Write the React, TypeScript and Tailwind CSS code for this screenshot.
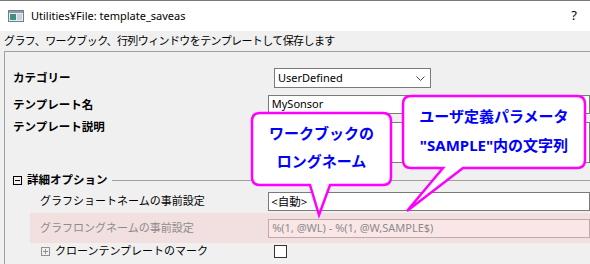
const font = "font-['Noto_Sans','Noto_Sans_CJK_JP',sans-serif]";

const WindowIcon = () => (
  <svg width="16" height="12" viewBox="0 0 16 12">
    <rect x="0.5" y="0.5" width="15" height="11" fill="#e8ecef" stroke="#6f7f8f" />
    <rect x="1" y="1" width="14" height="2" fill="#8a9aaa" />
    <rect x="2" y="4" width="6" height="6" fill="#3f8f7f" />
    <rect x="9" y="4" width="5" height="6" fill="#c8d0d8" />
  </svg>
);

const Callouts = () => (
  <>
    <svg className="absolute left-0 top-0" width="590" height="264" viewBox="0 0 590 264">
      <path
        d="M 260 113 H 383 Q 391 113 391 121 V 177 Q 391 185 383 185 H 330 L 319 215 L 310 185 H 260 Q 252 185 252 177 V 121 Q 252 113 260 113 Z"
        fill="#ffffff"
        stroke="#ff00ff"
        strokeWidth="2.5"
      />
      <path
        d="M 411 96 H 577 Q 585 96 585 104 V 160 Q 585 168 577 168 H 463 L 407 211 L 443 168 H 411 Q 403 168 403 160 V 104 Q 403 96 411 96 Z"
        fill="#ffffff"
        stroke="#ff00ff"
        strokeWidth="2.5"
      />
    </svg>
    <div className="absolute left-[252px] top-[113px] w-[139px] pt-[6px] text-center text-[15px] leading-[28px] font-bold text-[#0000ff]">
      <div>ワークブックの</div>
      <div>ロングネーム</div>
    </div>
    <div className="absolute left-[403px] top-[96px] w-[182px] pt-[6px] text-center text-[15px] leading-[29px] font-bold text-[#0000ff]">
      <div>ユーザ定義パラメータ</div>
      <div>"SAMPLE"内の文字列</div>
    </div>
  </>
);

export default function App() {
  return (
    <div className={`relative w-[590px] h-[264px] overflow-hidden bg-[#f0f0f0] text-black ${font}`}>
      {/* title bar */}
      <div className="h-[31px] bg-white border-t border-[#7a7a7a] flex items-center pl-[8px] pr-[13px]">
        <WindowIcon />
        <span className="ml-[7px] text-[11px]">Utilities¥File: template_saveas</span>
        <span className="ml-auto text-[13px]">?</span>
      </div>

      <div className="h-[20px] flex items-center pl-[4px] text-[11px] tracking-[-0.6px]">
        グラフ、ワークブック、行列ウィンドウをテンプレートして保存します
      </div>

      {/* settings panel */}
      <div className="ml-[4px] h-[220px] border-t border-l border-[#a0a0a0]">
        <div className="mt-[16px] h-[20px] flex items-center">
          <div className="w-[269px] pl-[8px] text-[11.5px] font-bold">カテゴリー</div>
          <div className="w-[157px] h-[20px] bg-white border border-[#7a7a7a] flex items-center pl-[3px] pr-[5px] text-[11px]">
            <span>UserDefined</span>
            <svg className="ml-auto" width="9" height="5" viewBox="0 0 9 5">
              <path d="M0.5 0.5 L4.5 4.5 L8.5 0.5" fill="none" stroke="#444" strokeWidth="1" />
            </svg>
          </div>
        </div>

        <div className="mt-[7px] h-[19px] flex items-center">
          <div className="w-[269px] pl-[8px] text-[11.5px] font-bold">テンプレート名</div>
          <div className="w-[330px] h-[19px] bg-white border border-[#7a7a7a] flex items-center pl-[3px] text-[11px]">
            MySonsor
          </div>
        </div>

        <div className="mt-[8px] h-[41px] flex">
          <div className="w-[269px] pl-[8px] -mt-[4px] text-[11.5px] font-bold">テンプレート説明</div>
          <div className="w-[330px] h-[41px] bg-white border border-[#7a7a7a]" />
        </div>

        <div className="mt-[7px] h-[20px] flex items-center pl-[8px]">
          <div className="w-[9px] h-[9px] border border-black flex items-center justify-center">
            <div className="w-[5px] h-px bg-black" />
          </div>
          <span className="ml-[5px] text-[11.5px] font-bold">詳細オプション</span>
          <div className="ml-[4px] flex-1 h-px bg-[#a0a0a0]" />
        </div>

        <div className="mt-[2px] h-[19px] flex items-center">
          <div className="w-[269px] pl-[35px] text-[11px]">グラフショートネームの事前設定</div>
          <div className="w-[330px] h-[19px] bg-white border border-[#7a7a7a] flex items-center pl-[2px] text-[11.5px]">
            &lt;自動&gt;
          </div>
        </div>

        <div className="mt-[2px] ml-[25px] h-[30px] bg-[#f2dfdf] flex items-center">
          <div className="w-[244px] pl-[10px] text-[11px] text-[#8c8c8c]">グラフロングネームの事前設定</div>
          <div className="w-[330px] h-[19px] bg-[#fae6e6] border border-[#c3aaaa] flex items-center pl-[3px] text-[11px] text-[#8c8c8c]">
            %(1, @WL) - %(1, @W,SAMPLE$)
          </div>
        </div>

        <div className="h-[16px] flex items-center">
          <div className="w-[269px] pl-[36px] flex items-center">
            <div className="w-[9px] h-[9px] border border-[#909090] flex items-center justify-center relative">
              <div className="w-[5px] h-px bg-[#909090]" />
              <div className="absolute w-px h-[5px] bg-[#909090]" />
            </div>
            <span className="ml-[5px] text-[11px]">クローンテンプレートのマーク</span>
          </div>
          <div className="w-[13px] h-[13px] bg-white border border-[#333333]" />
        </div>
      </div>

      <Callouts />
    </div>
  );
}
